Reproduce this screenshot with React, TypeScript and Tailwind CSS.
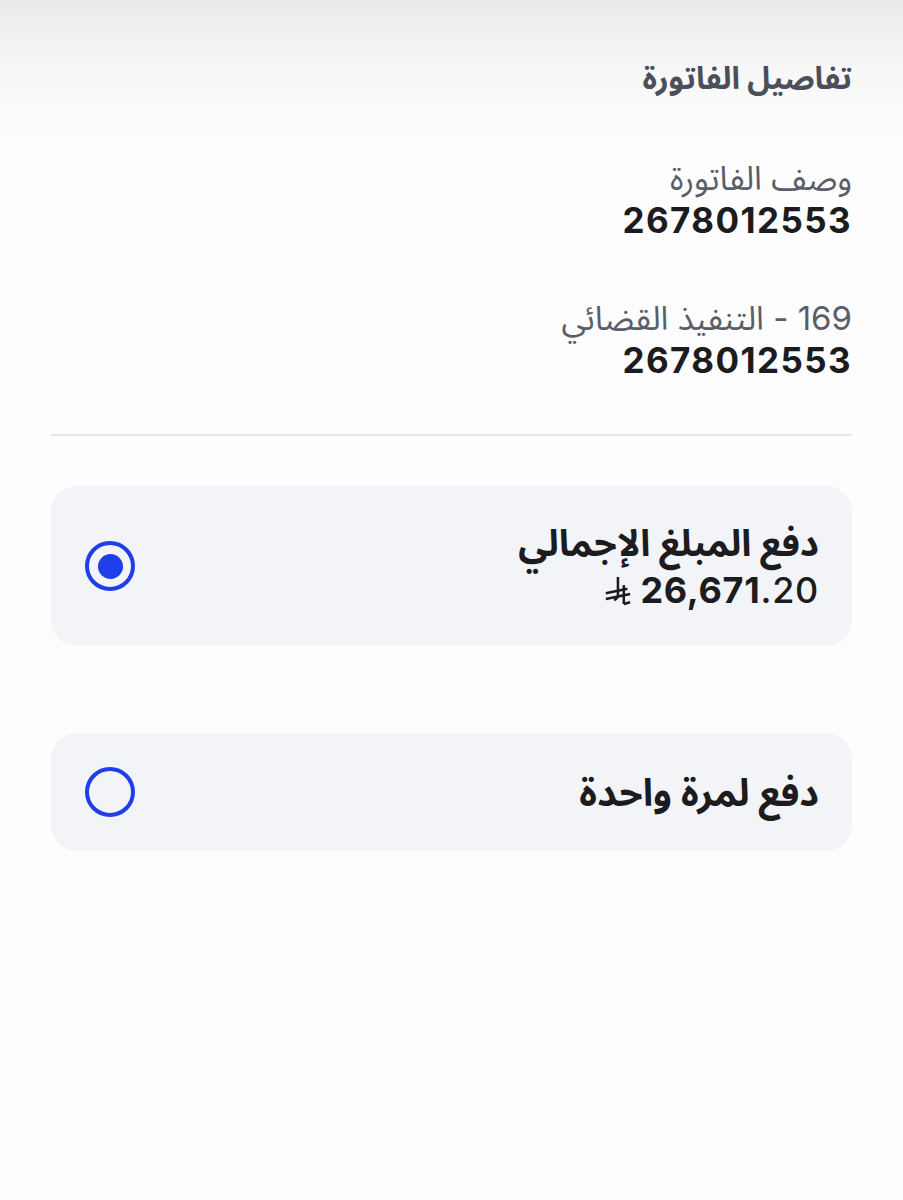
import { useState } from "react"

function RiyalSign({ className = "" }: { className?: string }) {
  return (
    <svg viewBox="0 0 30 32" className={className} fill="none" stroke="currentColor" strokeWidth="2.8" strokeLinecap="butt">
      <path d="M15.5 1 V21 Q15.5 25 11 26.5" />
      <path d="M22 10 V31" />
      <path d="M2 19 L26 14" />
      <path d="M2 25.5 L29 20" />
      <path d="M22 31 L29 29" />
    </svg>
  )
}

function Radio({ checked }: { checked: boolean }) {
  return (
    <div className="flex h-[50px] w-[50px] shrink-0 items-center justify-center rounded-full border-4 border-[#1f3de8]">
      {checked && <div className="h-[25px] w-[25px] rounded-full bg-[#1f3de8]" />}
    </div>
  )
}

export default function App() {
  const [choice, setChoice] = useState<"full" | "once">("full")

  return (
    <div
      dir="rtl"
      className="min-h-[1200px] w-full bg-[#fdfdfd] text-[#1c1c1e]"
      style={{ fontFamily: 'Inter, "Noto Sans Arabic", "DejaVu Sans", sans-serif' }}
    >
      <div className="bg-gradient-to-b from-[#e9e9e9] via-[#f7f7f7] to-[#fdfdfd] px-[51px] pt-[58px] pb-[40px]">
        <h1 className="text-[31px] font-bold leading-[40px] text-[#4a4f5a]">تفاصيل الفاتورة</h1>
      </div>

      <div className="px-[51px]">
        <div className="flex flex-col gap-[56px] pt-[20px]">
          <div>
            <div className="text-[33px] leading-[40px] text-[#595e69]">وصف الفاتورة</div>
            <div className="text-[35px] font-bold leading-[44px] tracking-[0.04em] text-[#1c1c1e]">2678012553</div>
          </div>
          <div>
            <div className="text-[33px] leading-[40px] text-[#595e69]">169 - التنفيذ القضائي</div>
            <div className="text-[35px] font-bold leading-[44px] tracking-[0.04em] text-[#1c1c1e]">2678012553</div>
          </div>
        </div>

        <div className="mt-[52px] h-[2px] w-full bg-[#e6e7eb]" />

        <button
          onClick={() => setChoice("full")}
          className="mt-[50px] flex h-[160px] w-full items-center justify-between rounded-[26px] bg-[#f3f4f8] pr-[33px] pl-[34px] text-right"
        >
          <div>
            <div className="text-[37px] font-bold leading-[46px] text-[#1c1c1e]">دفع المبلغ الإجمالي</div>
            <div dir="ltr" className="mt-[2px] flex items-center justify-end gap-[9px] text-[36px] leading-[44px] tracking-[0.02em] text-[#1c1c1e]">
              <RiyalSign className="h-[31px] w-[27px]" />
              <span>
                <span className="font-bold">26,671</span>
                <span className="font-medium">.20</span>
              </span>
            </div>
          </div>
          <Radio checked={choice === "full"} />
        </button>

        <button
          onClick={() => setChoice("once")}
          className="mt-[87px] flex h-[118px] w-full items-center justify-between rounded-[26px] bg-[#f3f4f8] pr-[33px] pl-[34px] text-right"
        >
          <div className="text-[38px] font-bold leading-[46px] text-[#1c1c1e]">دفع لمرة واحدة</div>
          <Radio checked={choice === "once"} />
        </button>
      </div>
    </div>
  )
}
